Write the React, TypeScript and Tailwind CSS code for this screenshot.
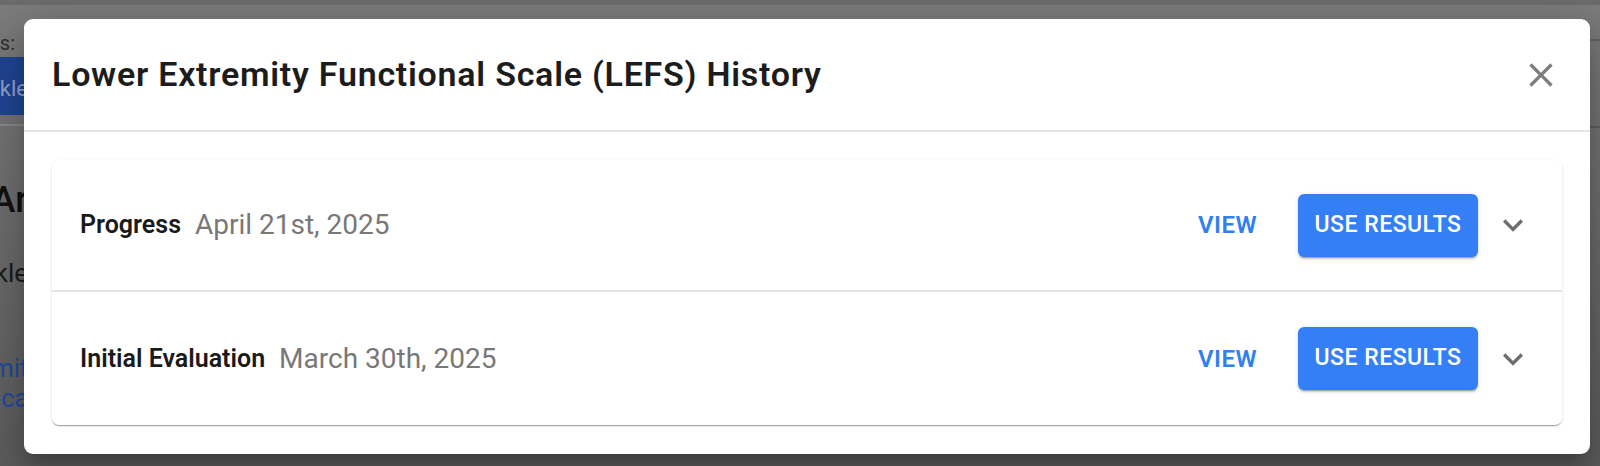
type Entry = { kind: string; date: string };

const entries: Entry[] = [
  { kind: "Progress", date: "April 21st, 2025" },
  { kind: "Initial Evaluation", date: "March 30th, 2025" },
];

function ExpandMore() {
  return (
    <svg viewBox="0 0 24 24" className="h-[40px] w-[40px] fill-[#6e6e6e]">
      <path d="M16.59 8.59 12 13.17 7.41 8.59 6 10l6 6 6-6z" />
    </svg>
  );
}

function CloseIcon() {
  return (
    <svg viewBox="0 0 24 24" className="h-[40px] w-[40px] fill-[#7d7d7d]">
      <path d="M19 6.41 17.59 5 12 10.59 6.41 5 5 6.41 10.59 12 5 17.59 6.41 19 12 13.41 17.59 19 19 17.59 13.41 12z" />
    </svg>
  );
}

// the page behind the dialog, already dimmed by the backdrop
function PageBehind() {
  return (
    <div className="flex h-full w-full flex-col bg-gradient-to-b from-[#7c7c7c] to-[#5c5c5c]">
      <div className="h-[5px] shrink-0 bg-[#6c6c6c]" />
      <div className="flex flex-1">
        <div className="flex w-[28px] flex-col">
          <div className="mt-[28px] flex h-[20px] w-[15px] justify-end whitespace-nowrap text-[20px] leading-[20px] text-[#2f2f2f]">
            Areas:
          </div>
          <div className="mt-[4px] flex h-[58px] items-center justify-end whitespace-nowrap bg-[#1f4593] pt-[4px] text-[22px] text-[#90a4cf]">
            Ankle
          </div>
          <div className="mt-[9px] h-[2px] w-[600px] bg-[#8a8a8a]" />
          <div className="mt-[56px] flex h-[36px] items-center justify-end whitespace-nowrap text-[36px] font-medium text-[#111111]">
            Ar
          </div>
          <div className="mt-[40px] flex h-[30px] items-center justify-end whitespace-nowrap text-[26px] text-[#1c1c1c]">
            Ankle
          </div>
          <div className="mt-[66px] flex h-[30px] items-center justify-end whitespace-nowrap text-[25px] text-[#1e4aa3]">
            Limit
          </div>
          <div className="mt-[0px] flex h-[30px] items-center justify-end whitespace-nowrap text-[25px] text-[#1e4aa3]">
            Ica
          </div>
        </div>
        <div className="flex-1" />
        <div className="flex w-[12px] flex-col">
          <div className="mt-[34px] h-[2px] bg-[#636363]" />
          <div className="mt-[85px] h-[2px] bg-[#5e5e5e]" />
        </div>
      </div>
    </div>
  );
}

function HistoryRow({ entry, last }: { entry: Entry; last: boolean }) {
  return (
    <div
      className={
        last
          ? "flex h-[133px] items-center pl-[28px] pr-[29px]"
          : "flex h-[132px] items-center border-b-2 border-[#e4e4e4] pl-[28px] pr-[29px]"
      }
    >
      <span className="text-[25px] font-semibold text-[#1a1a1a]">{entry.kind}</span>
      <span className="ml-[14px] text-[28px] text-[#787878]">{entry.date}</span>
      <button className="ml-auto mr-[25px] h-[63px] rounded-md px-[16px] text-[24px] font-semibold tracking-[0.5px] text-[#2f80f0]">
        VIEW
      </button>
      <button className="h-[63px] w-[180px] rounded-[6px] bg-[#347ff6] text-[23px] font-medium tracking-[0.5px] text-white shadow-[0px_3px_1px_-2px_rgba(0,0,0,0.2),0px_2px_2px_0px_rgba(0,0,0,0.14),0px_1px_5px_0px_rgba(0,0,0,0.12)]">
        USE RESULTS
      </button>
      <button className="ml-[15px] flex h-[40px] w-[40px] items-center justify-center">
        <ExpandMore />
      </button>
    </div>
  );
}

export default function App() {
  return (
    <div className="relative h-[466px] w-[1600px] overflow-hidden font-['Roboto','Liberation_Sans',sans-serif]">
      <PageBehind />

      {/* Dialog */}
      <div className="absolute left-[24px] top-[19px] flex h-[435px] w-[1566px] flex-col rounded-[9px] bg-white shadow-[0_11px_15px_-7px_rgba(0,0,0,0.2),0_24px_38px_3px_rgba(0,0,0,0.14),0_9px_46px_8px_rgba(0,0,0,0.12)]">
        <div className="flex h-[113px] shrink-0 items-center border-b-2 border-[#e4e4e4] pl-[28px] pr-[29px]">
          <h2 className="text-[34px] font-semibold tracking-[0.75px] text-[#1c1c1c]">
            Lower Extremity Functional Scale (LEFS) History
          </h2>
          <button className="ml-auto flex h-[40px] w-[40px] items-center justify-center">
            <CloseIcon />
          </button>
        </div>

        <div className="px-[28px] pt-[28px]">
          <div className="overflow-hidden rounded-[7px] bg-white shadow-[0px_2px_1px_-1px_rgba(0,0,0,0.2),0px_1px_1px_0px_rgba(0,0,0,0.14),0px_1px_3px_0px_rgba(0,0,0,0.12)]">
            {entries.map((e, i) => (
              <HistoryRow key={e.kind} entry={e} last={i === entries.length - 1} />
            ))}
          </div>
        </div>
      </div>
    </div>
  );
}
